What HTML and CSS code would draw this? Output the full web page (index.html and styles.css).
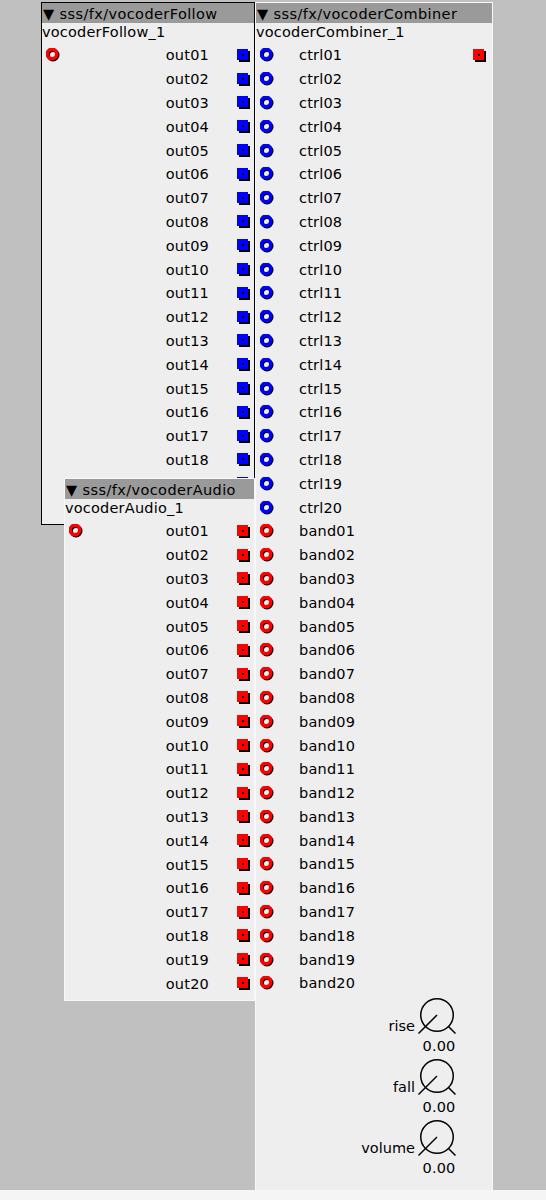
FILE: index.html
```html
<!DOCTYPE html>
<html>
<head>
<meta charset="utf-8">
<title>vocoder patch</title>
<link rel="stylesheet" href="styles.css">
</head>
<body>
<svg class="defs" width="0" height="0" aria-hidden="true">
  <defs>
    <symbol id="in-red" viewBox="0 0 14 14"><circle cx="7" cy="7" r="4.75" fill="none" stroke="#000" stroke-width="3.5"/><circle cx="6" cy="6" r="4.75" fill="none" stroke="#ff0000" stroke-width="3.5"/></symbol>
    <symbol id="in-blue" viewBox="0 0 14 14"><circle cx="7" cy="7" r="4.75" fill="none" stroke="#000" stroke-width="3.5"/><circle cx="6" cy="6" r="4.75" fill="none" stroke="#0000ff" stroke-width="3.5"/></symbol>
    <symbol id="out-red" viewBox="0 0 13 13"><rect x="2" y="2" width="11" height="11" fill="#000"/><rect x="0" y="0" width="11" height="11" fill="#ff0000"/><rect x="5" y="5" width="2" height="2" fill="#000"/></symbol>
    <symbol id="out-blue" viewBox="0 0 13 13"><rect x="2" y="2" width="11" height="11" fill="#000"/><rect x="0" y="0" width="11" height="11" fill="#0000ff"/><rect x="5" y="5" width="2" height="2" fill="#000"/></symbol>
    <symbol id="knob" viewBox="0 0 40 40"><circle cx="20" cy="20" r="16.25" fill="none" stroke="#000" stroke-width="1.5"/><line x1="20" y1="20" x2="1.5" y2="38.5" stroke="#000" stroke-width="1.5"/><line x1="31.5" y1="31.5" x2="38.5" y2="38.5" stroke="#000" stroke-width="1.5"/></symbol>
  </defs>
</svg>
<div class="canvas">

  <div class="obj follow">
    <div class="hdr">▼ sss/fx/vocoderFollow</div>
    <div class="name">vocoderFollow_1</div>
    <div class="body">
      <div class="col ins">
        <div class="row"><svg class="jack"><use href="#in-red"/></svg></div>
      </div>
      <div class="col outs">
        <div class="row"><span class="lbl">out01</span><svg class="sq"><use href="#out-blue"/></svg></div>
        <div class="row"><span class="lbl">out02</span><svg class="sq"><use href="#out-blue"/></svg></div>
        <div class="row"><span class="lbl">out03</span><svg class="sq"><use href="#out-blue"/></svg></div>
        <div class="row"><span class="lbl">out04</span><svg class="sq"><use href="#out-blue"/></svg></div>
        <div class="row"><span class="lbl">out05</span><svg class="sq"><use href="#out-blue"/></svg></div>
        <div class="row"><span class="lbl">out06</span><svg class="sq"><use href="#out-blue"/></svg></div>
        <div class="row"><span class="lbl">out07</span><svg class="sq"><use href="#out-blue"/></svg></div>
        <div class="row"><span class="lbl">out08</span><svg class="sq"><use href="#out-blue"/></svg></div>
        <div class="row"><span class="lbl">out09</span><svg class="sq"><use href="#out-blue"/></svg></div>
        <div class="row"><span class="lbl">out10</span><svg class="sq"><use href="#out-blue"/></svg></div>
        <div class="row"><span class="lbl">out11</span><svg class="sq"><use href="#out-blue"/></svg></div>
        <div class="row"><span class="lbl">out12</span><svg class="sq"><use href="#out-blue"/></svg></div>
        <div class="row"><span class="lbl">out13</span><svg class="sq"><use href="#out-blue"/></svg></div>
        <div class="row"><span class="lbl">out14</span><svg class="sq"><use href="#out-blue"/></svg></div>
        <div class="row"><span class="lbl">out15</span><svg class="sq"><use href="#out-blue"/></svg></div>
        <div class="row"><span class="lbl">out16</span><svg class="sq"><use href="#out-blue"/></svg></div>
        <div class="row"><span class="lbl">out17</span><svg class="sq"><use href="#out-blue"/></svg></div>
        <div class="row"><span class="lbl">out18</span><svg class="sq"><use href="#out-blue"/></svg></div>
        <div class="row"><span class="lbl">out19</span><svg class="sq"><use href="#out-blue"/></svg></div>
        <div class="row"><span class="lbl">out20</span><svg class="sq"><use href="#out-blue"/></svg></div>
      </div>
    </div>
  </div>

  <div class="obj combiner">
    <div class="hdr">▼ sss/fx/vocoderCombiner</div>
    <div class="name">vocoderCombiner_1</div>
    <div class="body">
      <div class="col ins">
        <div class="row"><svg class="jack"><use href="#in-blue"/></svg><span class="lbl">ctrl01</span></div>
        <div class="row"><svg class="jack"><use href="#in-blue"/></svg><span class="lbl">ctrl02</span></div>
        <div class="row"><svg class="jack"><use href="#in-blue"/></svg><span class="lbl">ctrl03</span></div>
        <div class="row"><svg class="jack"><use href="#in-blue"/></svg><span class="lbl">ctrl04</span></div>
        <div class="row"><svg class="jack"><use href="#in-blue"/></svg><span class="lbl">ctrl05</span></div>
        <div class="row"><svg class="jack"><use href="#in-blue"/></svg><span class="lbl">ctrl06</span></div>
        <div class="row"><svg class="jack"><use href="#in-blue"/></svg><span class="lbl">ctrl07</span></div>
        <div class="row"><svg class="jack"><use href="#in-blue"/></svg><span class="lbl">ctrl08</span></div>
        <div class="row"><svg class="jack"><use href="#in-blue"/></svg><span class="lbl">ctrl09</span></div>
        <div class="row"><svg class="jack"><use href="#in-blue"/></svg><span class="lbl">ctrl10</span></div>
        <div class="row"><svg class="jack"><use href="#in-blue"/></svg><span class="lbl">ctrl11</span></div>
        <div class="row"><svg class="jack"><use href="#in-blue"/></svg><span class="lbl">ctrl12</span></div>
        <div class="row"><svg class="jack"><use href="#in-blue"/></svg><span class="lbl">ctrl13</span></div>
        <div class="row"><svg class="jack"><use href="#in-blue"/></svg><span class="lbl">ctrl14</span></div>
        <div class="row"><svg class="jack"><use href="#in-blue"/></svg><span class="lbl">ctrl15</span></div>
        <div class="row"><svg class="jack"><use href="#in-blue"/></svg><span class="lbl">ctrl16</span></div>
        <div class="row"><svg class="jack"><use href="#in-blue"/></svg><span class="lbl">ctrl17</span></div>
        <div class="row"><svg class="jack"><use href="#in-blue"/></svg><span class="lbl">ctrl18</span></div>
        <div class="row"><svg class="jack"><use href="#in-blue"/></svg><span class="lbl">ctrl19</span></div>
        <div class="row"><svg class="jack"><use href="#in-blue"/></svg><span class="lbl">ctrl20</span></div>
        <div class="row"><svg class="jack"><use href="#in-red"/></svg><span class="lbl">band01</span></div>
        <div class="row"><svg class="jack"><use href="#in-red"/></svg><span class="lbl">band02</span></div>
        <div class="row"><svg class="jack"><use href="#in-red"/></svg><span class="lbl">band03</span></div>
        <div class="row"><svg class="jack"><use href="#in-red"/></svg><span class="lbl">band04</span></div>
        <div class="row"><svg class="jack"><use href="#in-red"/></svg><span class="lbl">band05</span></div>
        <div class="row"><svg class="jack"><use href="#in-red"/></svg><span class="lbl">band06</span></div>
        <div class="row"><svg class="jack"><use href="#in-red"/></svg><span class="lbl">band07</span></div>
        <div class="row"><svg class="jack"><use href="#in-red"/></svg><span class="lbl">band08</span></div>
        <div class="row"><svg class="jack"><use href="#in-red"/></svg><span class="lbl">band09</span></div>
        <div class="row"><svg class="jack"><use href="#in-red"/></svg><span class="lbl">band10</span></div>
        <div class="row"><svg class="jack"><use href="#in-red"/></svg><span class="lbl">band11</span></div>
        <div class="row"><svg class="jack"><use href="#in-red"/></svg><span class="lbl">band12</span></div>
        <div class="row"><svg class="jack"><use href="#in-red"/></svg><span class="lbl">band13</span></div>
        <div class="row"><svg class="jack"><use href="#in-red"/></svg><span class="lbl">band14</span></div>
        <div class="row"><svg class="jack"><use href="#in-red"/></svg><span class="lbl">band15</span></div>
        <div class="row"><svg class="jack"><use href="#in-red"/></svg><span class="lbl">band16</span></div>
        <div class="row"><svg class="jack"><use href="#in-red"/></svg><span class="lbl">band17</span></div>
        <div class="row"><svg class="jack"><use href="#in-red"/></svg><span class="lbl">band18</span></div>
        <div class="row"><svg class="jack"><use href="#in-red"/></svg><span class="lbl">band19</span></div>
        <div class="row"><svg class="jack"><use href="#in-red"/></svg><span class="lbl">band20</span></div>
      </div>
      <div class="col outs">
        <div class="row"><svg class="sq"><use href="#out-red"/></svg></div>
      </div>
    </div>
    <div class="knobs">
      <div class="knob"><span class="klbl">rise</span><div class="kcol"><svg class="kdial"><use href="#knob"/></svg><span class="kval">0.00</span></div></div>
      <div class="knob"><span class="klbl">fall</span><div class="kcol"><svg class="kdial"><use href="#knob"/></svg><span class="kval">0.00</span></div></div>
      <div class="knob"><span class="klbl">volume</span><div class="kcol"><svg class="kdial"><use href="#knob"/></svg><span class="kval">0.00</span></div></div>
    </div>
  </div>

  <div class="obj audio">
    <div class="hdr">▼ sss/fx/vocoderAudio</div>
    <div class="name">vocoderAudio_1</div>
    <div class="body">
      <div class="col ins">
        <div class="row"><svg class="jack"><use href="#in-red"/></svg></div>
      </div>
      <div class="col outs">
        <div class="row"><span class="lbl">out01</span><svg class="sq"><use href="#out-red"/></svg></div>
        <div class="row"><span class="lbl">out02</span><svg class="sq"><use href="#out-red"/></svg></div>
        <div class="row"><span class="lbl">out03</span><svg class="sq"><use href="#out-red"/></svg></div>
        <div class="row"><span class="lbl">out04</span><svg class="sq"><use href="#out-red"/></svg></div>
        <div class="row"><span class="lbl">out05</span><svg class="sq"><use href="#out-red"/></svg></div>
        <div class="row"><span class="lbl">out06</span><svg class="sq"><use href="#out-red"/></svg></div>
        <div class="row"><span class="lbl">out07</span><svg class="sq"><use href="#out-red"/></svg></div>
        <div class="row"><span class="lbl">out08</span><svg class="sq"><use href="#out-red"/></svg></div>
        <div class="row"><span class="lbl">out09</span><svg class="sq"><use href="#out-red"/></svg></div>
        <div class="row"><span class="lbl">out10</span><svg class="sq"><use href="#out-red"/></svg></div>
        <div class="row"><span class="lbl">out11</span><svg class="sq"><use href="#out-red"/></svg></div>
        <div class="row"><span class="lbl">out12</span><svg class="sq"><use href="#out-red"/></svg></div>
        <div class="row"><span class="lbl">out13</span><svg class="sq"><use href="#out-red"/></svg></div>
        <div class="row"><span class="lbl">out14</span><svg class="sq"><use href="#out-red"/></svg></div>
        <div class="row"><span class="lbl">out15</span><svg class="sq"><use href="#out-red"/></svg></div>
        <div class="row"><span class="lbl">out16</span><svg class="sq"><use href="#out-red"/></svg></div>
        <div class="row"><span class="lbl">out17</span><svg class="sq"><use href="#out-red"/></svg></div>
        <div class="row"><span class="lbl">out18</span><svg class="sq"><use href="#out-red"/></svg></div>
        <div class="row"><span class="lbl">out19</span><svg class="sq"><use href="#out-red"/></svg></div>
        <div class="row"><span class="lbl">out20</span><svg class="sq"><use href="#out-red"/></svg></div>
      </div>
    </div>
  </div>

</div>
</body>
</html>
```

FILE: styles.css
```css
* { box-sizing: border-box; }
html, body { margin: 0; padding: 0; }
body {
  width: 546px;
  height: 1200px;
  overflow: hidden;
  background: #f5f5f5;
  font-family: "DejaVu Sans", "Liberation Sans", sans-serif;
  font-size: 14.5px;
  letter-spacing: 0.2px;
  color: #000;
}
.defs { position: absolute; width: 0; height: 0; overflow: hidden; }
.canvas {
  position: relative;
  height: 1190px;
  background: #c0c0c0;
}
.obj {
  position: absolute;
  background: #eeeeee;
  border: 1px solid #f8f8f8;
  padding-bottom: 4.5px;
}
.follow { left: 41px; top: 2px; width: 214px; border-color: #000; }
.combiner { left: 255px; top: 2px; width: 238px; padding-bottom: 11.5px; }
.audio { left: 64px; top: 478px; width: 191px; }

.hdr {
  height: 20px;
  line-height: 22px;
  background: #9a9a9a;
  white-space: nowrap;
  overflow: hidden;
  padding-left: 1px;
  letter-spacing: 0.4px;
}
.name {
  height: 16px;
  line-height: 18px;
  white-space: nowrap;
}
.body {
  display: flex;
  justify-content: space-between;
  padding-top: 4.5px;
}
.col { display: flex; flex-direction: column; }
.row {
  height: 23.8px;
  display: flex;
  align-items: center;
  white-space: nowrap;
}
.ins { padding-left: 4px; }
.outs { padding-right: 4px; }
.combiner .outs { padding-right: 6px; }
.outs .row { justify-content: flex-end; }
.outs .lbl { margin-right: 28px; }
.ins .lbl { margin-left: 25px; }
.jack { width: 14px; height: 14px; display: block; flex: none; }
.sq { width: 13px; height: 13px; display: block; flex: none; }

.knobs {
  display: flex;
  flex-direction: column;
  align-items: flex-end;
  padding-right: 35px;
}
.knob {
  height: 61px;
  display: flex;
  align-items: flex-start;
}
.klbl {
  margin-top: 23px;
  margin-right: 2px;
  line-height: 17px;
  letter-spacing: 0;
}
.kcol {
  width: 40px;
  display: flex;
  flex-direction: column;
}
.kdial { width: 40px; height: 40px; display: block; }
.kval {
  margin-top: 3px;
  line-height: 17px;
  text-align: center;
  padding-left: 4px;
  white-space: nowrap;
}
```
